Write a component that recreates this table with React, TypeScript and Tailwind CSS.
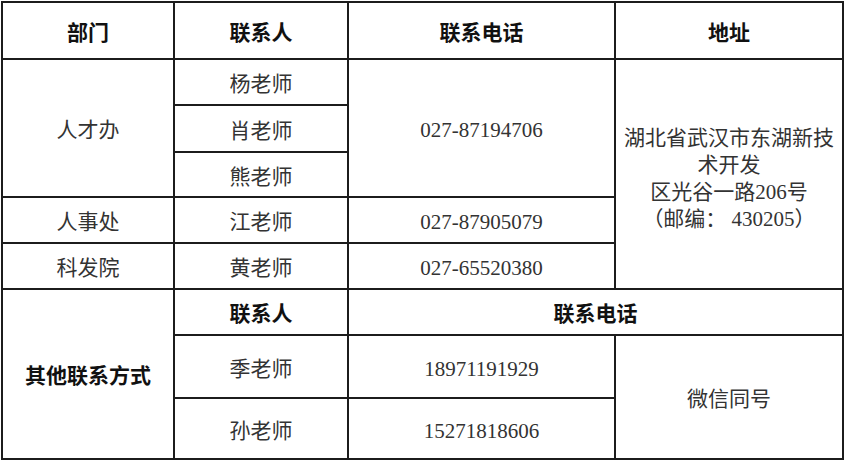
const cell = 'bg-white flex items-center justify-center text-center pt-[5px]';
const head = `${cell} font-bold text-[#111]`;
const body = `${cell} text-[#333]`;

export default function App() {
  return (
    <div className="w-[850px] h-[464px] bg-white p-px font-['Liberation_Serif','Noto_Sans_CJK_SC',serif] text-[21px] leading-none">
      <div className="grid w-fit bg-[#1c1c1c] p-[2px] gap-[2px] grid-cols-[170px_172px_265px_226px] grid-rows-[55px_44px_45px_43px_44px_44px_44px_61px_59px]">
        {/* 表头 */}
        <div className={head}>部门</div>
        <div className={head}>联系人</div>
        <div className={head}>联系电话</div>
        <div className={head}>地址</div>

        {/* 人才办 */}
        <div className={`${body} row-span-3`}>人才办</div>
        <div className={body}>杨老师</div>
        <div className={`${body} row-span-3`}>027-87194706</div>
        <div className={`${body} row-span-5 leading-[27px] pt-[10px]`}>
          <p>
            湖北省武汉市东湖新技
            <br />
            术开发
            <br />
            区光谷一路206号
            <br />
            （邮编： 430205）
          </p>
        </div>
        <div className={body}>肖老师</div>
        <div className={body}>熊老师</div>

        <div className={body}>人事处</div>
        <div className={body}>江老师</div>
        <div className={body}>027-87905079</div>

        <div className={body}>科发院</div>
        <div className={body}>黄老师</div>
        <div className={body}>027-65520380</div>

        {/* 其他联系方式 */}
        <div className={`${head} row-span-3`}>其他联系方式</div>
        <div className={head}>联系人</div>
        <div className={`${head} col-span-2`}>联系电话</div>
        <div className={body}>季老师</div>
        <div className={body}>18971191929</div>
        <div className={`${body} row-span-2`}>微信同号</div>
        <div className={body}>孙老师</div>
        <div className={body}>15271818606</div>
      </div>
    </div>
  );
}
